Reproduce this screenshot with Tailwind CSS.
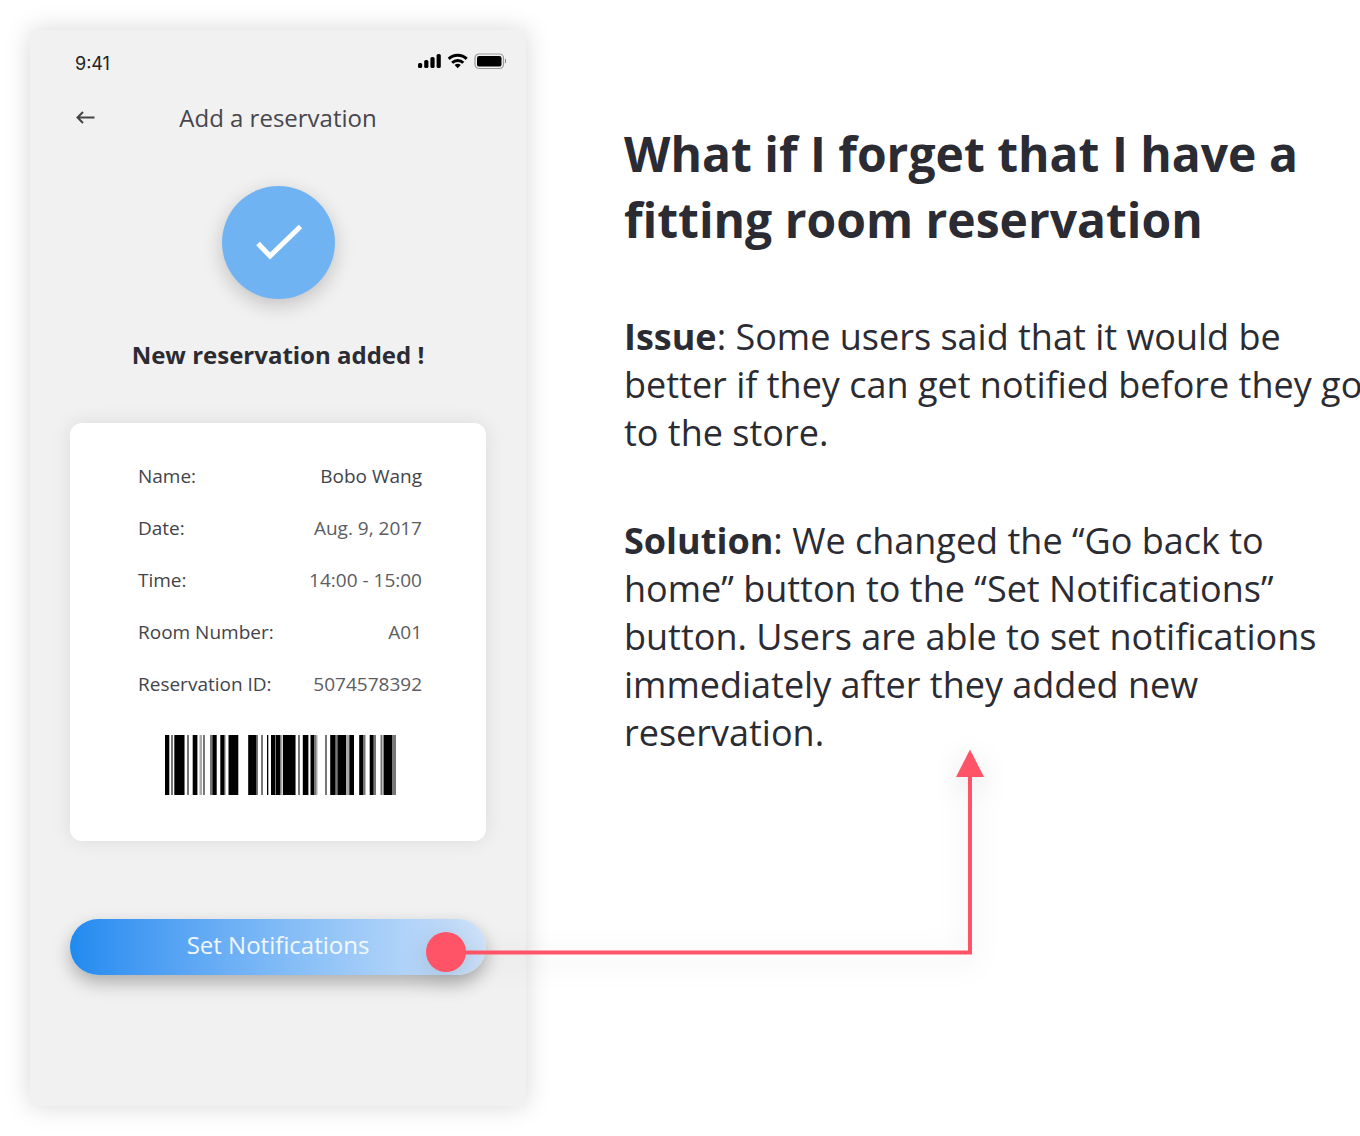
<!DOCTYPE html>
<html lang="en">
<head>
<meta charset="utf-8">
<meta name="viewport" content="width=device-width, initial-scale=1">
<title>Add a reservation</title>
<script src="https://cdn.jsdelivr.net/npm/@tailwindcss/browser@4"></script>
</head>
<body class="overflow-x-hidden bg-white font-['Open_Sans',sans-serif] text-[#2b2b33]">
<main class="flex items-start gap-[98px] p-[30px] pr-0">

  <!-- Phone screen -->
  <section class="flex w-full max-w-[496px] shrink-0 flex-col bg-[#f1f1f1] px-10 pb-[131px] shadow-[0_0_24px_rgba(0,0,0,0.16)]">
    <div class="flex h-16 items-center justify-between pl-[5px] -mr-5">
      <span class="pt-1 font-['Inter',sans-serif] text-lg leading-6 text-[#222]">9:41</span>
      <svg class="h-6 w-[90px]" viewBox="0 1 90 24" aria-hidden="true">
        <g fill="#000">
          <rect x="2" y="14" width="4.200" height="5" rx="1.600"/>
          <rect x="8.200" y="11" width="4.200" height="8" rx="1.600"/>
          <rect x="14.400" y="8" width="4.200" height="11" rx="1.600"/>
          <rect x="20.600" y="5" width="4.200" height="14" rx="1.600"/>
          <path d="M41.700 19.200l-3.100-3.100a4.600 4.600 0 0 1 6.200 0z"/>
          <rect x="61" y="7" width="24.500" height="10.600" rx="2.200"/>
          <path d="M89 9.800v4.400a2.300 2.300 0 0 0 0-4.400z" fill="#888"/>
        </g>
        <g fill="none" stroke="#000" stroke-width="2.900">
          <path d="M32.700 9.900a13 13 0 0 1 18 0"/>
          <path d="M36.100 13.700a8.200 8.200 0 0 1 11.200 0"/>
        </g>
        <rect x="59" y="5" width="28.500" height="14.500" rx="4" fill="none" stroke="#999" stroke-width="1.200"/>
      </svg>
    </div>

    <header class="relative flex h-12 items-center justify-center">
      <button type="button" aria-label="Back" class="absolute left-1 top-[11px]">
        <svg class="size-6" viewBox="0 0 24 24" fill="none" stroke="#444" stroke-width="2" aria-hidden="true"><path d="M20.500 12.500H3.500M9 7L3.500 12.500L9 18"/></svg>
      </button>
      <h1 class="text-2xl text-[#46464c]">Add a reservation</h1>
    </header>

    <div class="mt-11 flex size-[113px] items-center justify-center self-center rounded-full bg-[#70b3f3] shadow-[0_6px_20px_rgba(0,0,0,0.2)]">
      <svg class="h-9 w-12" viewBox="0 0 48 36" fill="none" stroke="#fff" stroke-width="5" aria-hidden="true"><path d="M4 18.500l12 12.500L46.500 1.500"/></svg>
    </div>
    <p class="mt-10 text-center text-2xl font-bold">New reservation added !</p>

    <div class="mt-[52px] rounded-xl bg-white px-16 pb-[46px] pt-[27px] shadow-[0_0_20px_rgba(0,0,0,0.09)]">
      <table class="w-full text-[19px] text-[#43434a]">
        <tbody>
          <tr class="h-[52px]"><th scope="row" class="pl-1 text-left font-normal">Name:</th><td class="text-right">Bobo Wang</td></tr>
          <tr class="h-[52px]"><th scope="row" class="pl-1 text-left font-normal">Date:</th><td class="text-right text-[#5c5c62]">Aug. 9, 2017</td></tr>
          <tr class="h-[52px]"><th scope="row" class="pl-1 text-left font-normal">Time:</th><td class="text-right text-[#5c5c62]">14:00 - 15:00</td></tr>
          <tr class="h-[52px]"><th scope="row" class="pl-1 text-left font-normal">Room Number:</th><td class="text-right text-[#5c5c62]">A01</td></tr>
          <tr class="h-[52px]"><th scope="row" class="pl-1 text-left font-normal">Reservation ID:</th><td class="text-right text-[#5c5c62]">5074578392</td></tr>
        </tbody>
      </table>
      <svg class="mx-auto mt-[25px] h-[60px] w-[238px]" viewBox="159 0 238 60" role="img" aria-label="Barcode 5074578392">
        <path fill="#000" d="M165 0h4.300v60H165zM174.300 0H184v60h-9.700zM192.700 0h4.700v60h-4.700zM212.300 0h4.400v60h-4.400zM220.300 0h4.400v60h-4.400zM228.500 0h9.800v60h-9.800zM248.200 0h8.500v60h-8.500zM267 0h1.300v60H267zM271 0h4v60h-4zM276 0h4.500v60H276zM283 0h12v60h-12zM302.800 0h5.600v60h-5.600zM310.500 0h4v60h-4zM330.200 0h5.500v60h-5.500zM337.300 0h9v60h-9zM349.200 0h4.800v60h-4.800zM359.200 0h4v60h-4zM369.700 0h4v60h-4zM383.500 0h9v60h-9z"/>
        <path fill="#777" d="M171 0h2v60h-2zM184 0h1v60h-1zM187 0h2v60h-2zM203 0h2v60h-2zM210 0h2v60h-2zM224.500 0h1v60h-1zM256.500 0h1.500v60h-1.500zM261 0h2v60h-2zM275 0h1v60h-1zM295 0h1v60h-1zM298 0h2v60h-2zM314.500 0h1.500v60h-1.500zM325 0h2v60h-2zM335.700 0h1.600v60h-1.600zM363 0h2.500v60H363zM374 0h2v60h-2zM380.500 0h2v60h-2zM392.500 0h3.500v60h-3.500z"/>
        <path fill="#aaa" d="M199.500 0h2.500v60h-2.500zM281 0h1.500v60H281zM316 0h1.500v60H316zM346.300 0h2.900v60h-2.900z"/>
      </svg>
    </div>

    <div class="relative mt-[78px]">
      <button type="button" class="h-14 w-full rounded-full bg-linear-to-r from-[#1f8af0] via-[#7fbaf6] to-[#cfe3fa] pb-1 text-2xl text-white/90 shadow-[0_8px_18px_rgba(0,0,0,0.28)]">Set Notifications</button>
      <!-- Callout from the button to the explanation -->
      <svg class="pointer-events-none absolute bottom-[3px] left-[356px] h-[224px] w-[560px] overflow-visible drop-shadow-[0_6px_14px_rgba(0,0,0,0.14)]" viewBox="0 0 560 224" aria-hidden="true">
        <path d="M20 204.500H544V26" fill="none" stroke="#ff5468" stroke-width="4"/>
        <path d="M544 1.500L558 29H530z" fill="#ff5468"/>
        <circle cx="20" cy="204" r="20" fill="#ff5468"/>
      </svg>
    </div>
  </section>

  <!-- Explanation -->
  <article class="flex-1 whitespace-nowrap pt-[91px] text-4xl leading-[48px]">
    <h2 class="text-5xl font-bold leading-[66px]">What if I forget that I have a<br>fitting room reservation</h2>
    <p class="mt-[60px]"><strong class="font-bold">Issue</strong>: Some users said that it would be<br>better if they can get notified before they go<br>to the store.</p>
    <p class="mt-[60px]"><strong class="font-bold">Solution</strong>: We changed the “Go back to<br>home” button to the “Set Notifications”<br>button. Users are able to set notifications<br>immediately after they added new<br>reservation.</p>
  </article>
</main>
</body>
</html>
